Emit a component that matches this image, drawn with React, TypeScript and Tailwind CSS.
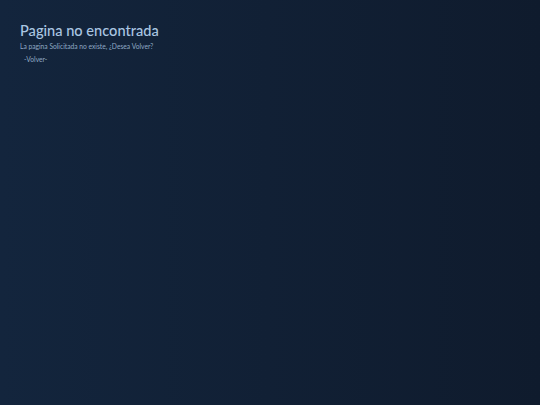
export default function App() {
  return (
    <div className="min-h-screen w-full bg-gradient-to-r from-[#13253d] to-[#0f1b2d] font-['Lato',sans-serif]">
      <div className="px-5 pt-[21px]">
        <h1 className="text-[14.6px] leading-[20px] text-[#aac6e2] font-medium">Pagina no encontrada</h1>
        <p className="mt-[1px] text-[6.7px] leading-[8px] text-[#8fa9c4]">La pagina Solicitada no existe, ¿Desea Volver?</p>
        <a href="#" className="mt-[5px] ml-1 block text-[6.7px] leading-[8px] text-[#8fa9c4]">-Volver-</a>
      </div>
    </div>
  );
}
